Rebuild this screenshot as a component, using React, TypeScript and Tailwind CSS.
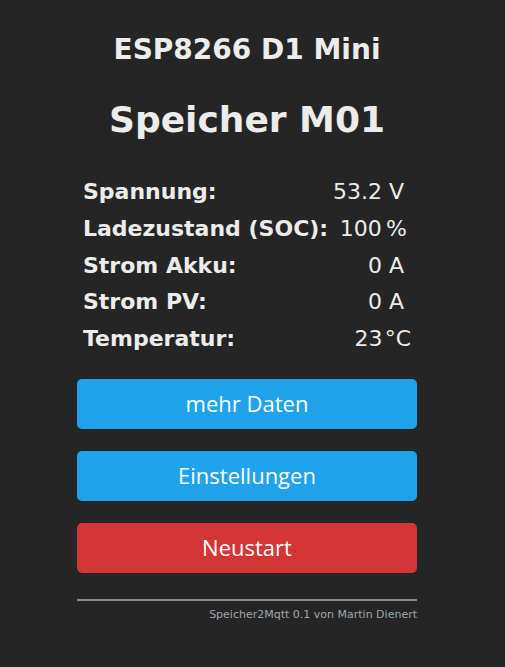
const rows = [
	{ label: "Spannung:", value: "53.2 V", pad: "pr-[7px]" },
	{ label: "Ladezustand (SOC):", value: "100\u202F%", pad: "pr-[4px]" },
	{ label: "Strom Akku:", value: "0 A", pad: "pr-[7px]" },
	{ label: "Strom PV:", value: "0 A", pad: "pr-[7px]" },
	{ label: "Temperatur:", value: "23\u200A°C", pad: "pr-0" },
];

const App = () => {
	return (
		<div className="min-h-[667px] w-full bg-[#252525] text-[#ececec] font-['DejaVu_Sans',sans-serif] pr-[11px]">
			<div className="mx-auto w-[340px] pt-[34px] flex flex-col">
				<h2 className="text-center text-[28px] leading-[32px] font-bold">
					ESP8266 D1 Mini
				</h2>
				<h1 className="mt-[34px] text-center text-[36px] leading-[40px] font-bold">
					Speicher M01
				</h1>
				<div className="mt-[34px] px-[6px] text-[22px] leading-[36.75px]">
					{rows.map((r) => (
						<div key={r.label} className="flex justify-between">
							<span className="font-bold">{r.label}</span>
							<span className={r.pad}>{r.value}</span>
						</div>
					))}
				</div>
				<div className="mt-[21px] flex flex-col gap-[22px] font-['Open_Sans',sans-serif] text-[22px] text-white">
					<button type="button" className="h-[50px] rounded-[5px] bg-[#1fa3ec]">
						mehr Daten
					</button>
					<button type="button" className="h-[50px] rounded-[5px] bg-[#1fa3ec]">
						Einstellungen
					</button>
					<button type="button" className="h-[50px] rounded-[5px] bg-[#d43535]">
						Neustart
					</button>
				</div>
				<div className="mt-[26px] border-t-2 border-t-[#8a8a8a]" />
				<p className="mt-[6px] text-right text-[11px] leading-[16px] text-[#9ea5ac]">
					Speicher2Mqtt 0.1 von Martin Dienert
				</p>
			</div>
		</div>
	);
};

export default App;
